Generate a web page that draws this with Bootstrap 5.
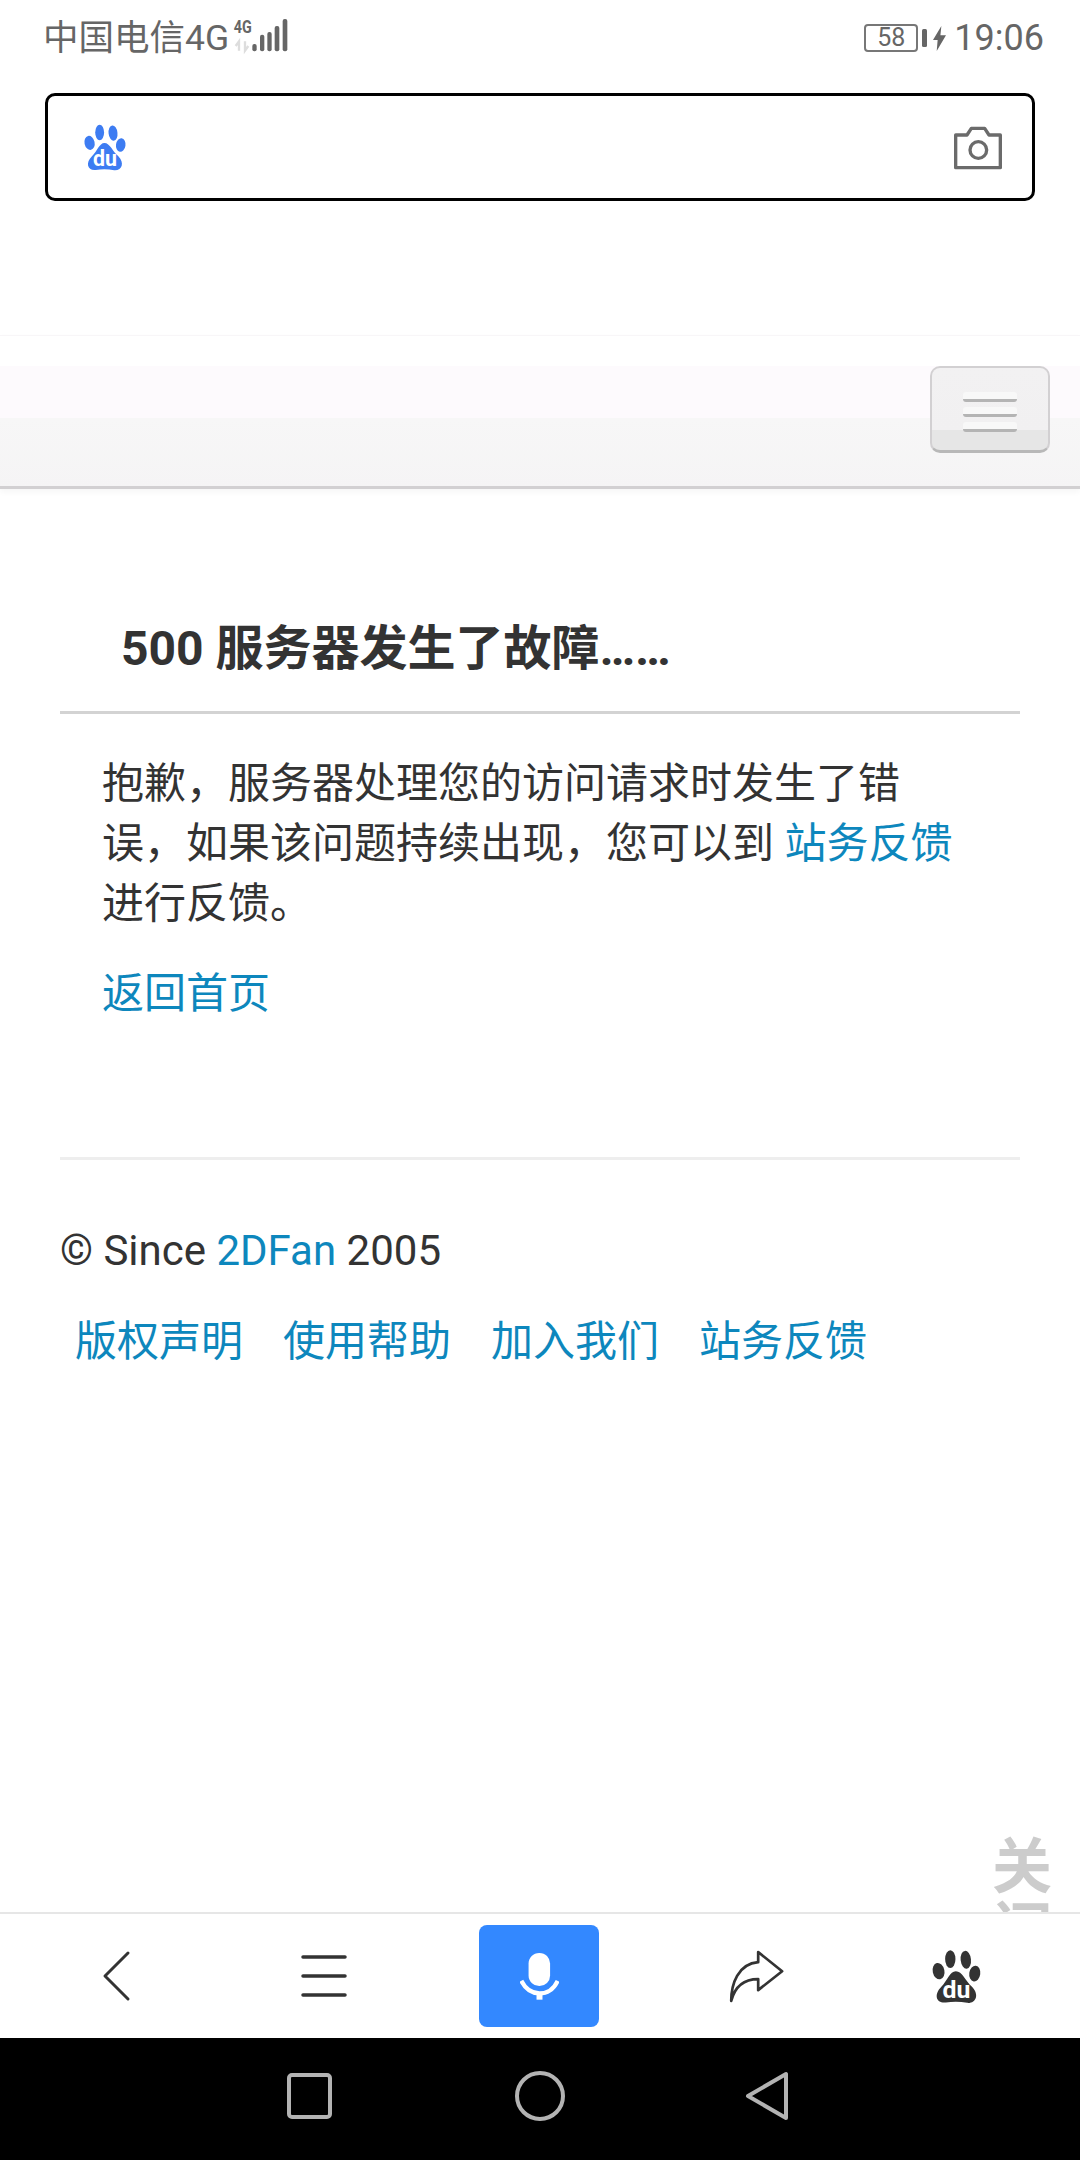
<!doctype html>
<html lang="zh-CN">
<head>
  <meta charset="UTF-8">
  <title>500 服务器发生了故障</title>
  <link rel="stylesheet" href="https://cdn.jsdelivr.net/npm/bootstrap@5.3.0/dist/css/bootstrap.min.css">
  <style>
    html, body { margin: 0; height: 2160px; overflow: hidden; }
    body { background: #fff; color: #333; font-family: Roboto, "Noto Sans CJK SC", sans-serif; font-size: 42px; line-height: 60px; }
    a { color: #0d87bd; text-decoration: none; }
    svg { display: block; flex: none; }
    .shell { height: 2160px; }
    .statusbar { height: 68px; padding: 18px 36px 0 43px; color: #666; font-size: 35.500px; line-height: 40px; }
    .signal-icon { margin: -8px 0 0 -2px; }
    .status-time { font-size: 36px; margin-left: 8px; }
    .batt { width: 54px; height: 28px; border: 2px solid #777; border-radius: 4px; font-size: 25px; line-height: 24px; text-align: center; color: #666; }
    .nub-icon { margin-left: 4px; }
    .bolt-icon { margin-left: 6px; }
    .searchbox { height: 108px; margin: 25px 45px 0 45px; padding: 0 29px 0 35px; border: 3px solid #000; border-radius: 10px; }
    .topnav { height: 154px; margin-top: 134px; padding: 30px 30px 0 0; align-items: flex-start; background: linear-gradient(#fff 0, #fff 30px, #fdfafd 30px, #fdfafd 82px, #f7f7f7 82px, #f5f4f5 152px); border-top: 1px solid #f8f6f8; border-bottom: 3px solid #d2d0d2; box-shadow: 0 3px 6px rgba(0,0,0,.04); }
    .menu-toggle { width: 120px; height: 87px; padding: 6px 0 0; gap: 5px; border: 2px solid #d2d0d2; border-bottom: 3px solid #b8b8b8; border-radius: 10px; background: linear-gradient(#f2f1f2, #f1f0f1 75%, #e6e6e6 75%); }
    .menu-toggle:hover { background: linear-gradient(#f2f1f2, #f1f0f1 75%, #e6e6e6 75%); }
    .menu-bar { width: 54px; height: 10px; border-radius: 3px; background: #f8f8f8; border-bottom: 3px solid #b4b4b4; }
    .content { padding: 0 60px; }
    .err-title { margin: 0; padding: 132px 0 0 61px; height: 222px; font-size: 48px; line-height: 56px; font-weight: 700; color: #333; }
    .err-rule { border-top: 3px solid #d3d3d3; }
    .err-text { padding: 40px 42px 0; }
    .err-text p { margin: 0 0 30px; }
    .foot-rule { margin-top: 133px; border-top: 3px solid #eee; }
    .foot-copy { margin-top: 61px; }
    .foot-links { margin-top: 31px; padding-left: 15px; gap: 40px; }
    .watermark { position: absolute; left: 992px; top: 1836px; width: 62px; height: 76px; overflow: hidden; color: #ccc; font-size: 60px; line-height: 64px; font-weight: 700; }
    .toolbar { height: 126px; border-top: 2px solid #e6e6e6; background: #fff; position: relative; }
    .tool-back { margin-left: 101px; }
    .tool-menu { margin-left: 170px; }
    .mic-btn { width: 120px; height: 102px; margin-left: 132px; background: #3388ff; border-radius: 8px; }
    .tool-share { margin-left: 127px; }
    .tool-paw { margin-left: 144px; }
    .sysnav { height: 122px; padding-bottom: 6px; background: #000; }
    .nav-square { margin-left: 287px; }
    .nav-circle { margin-left: 183px; }
    .nav-triangle { margin-left: 180px; }
  </style>
</head>
<body>
<div class="shell d-flex flex-column">
  <div class="statusbar d-flex justify-content-between align-items-start">
    <div class="d-flex align-items-start">
      <span>中国电信4G</span>
      <svg class="signal-icon" width="70" height="50" viewBox="30 0 210 150">
        <text x="50" y="68" fill="#666" font-family="Roboto, sans-serif" font-weight="700" font-size="54" textLength="54" lengthAdjust="spacingAndGlyphs">4G</text>
        <path d="M66 122V94l-10 14M84 94v28l10-14" fill="none" stroke="#ddd" stroke-width="7"/>
        <rect x="106" y="102" width="13" height="22" rx="6" fill="#666"/>
        <rect x="129" y="74" width="13" height="50" rx="6" fill="#666"/>
        <rect x="151" y="66" width="13" height="58" rx="6" fill="#666"/>
        <rect x="173" y="48" width="14" height="76" rx="6" fill="#666"/>
        <rect x="197" y="27" width="14" height="97" rx="6" fill="#666"/>
      </svg>
    </div>
    <div class="d-flex align-items-center">
      <div class="batt">58</div>
      <svg class="nub-icon" width="5" height="18" viewBox="0 0 5 18"><rect width="5" height="18" rx="1.500" fill="#666"/></svg>
      <svg class="bolt-icon" width="13" height="27" viewBox="0 0 14 27"><path d="M9 0L0 15h5l-1 12L14 10H8z" fill="#666"/></svg>
      <span class="status-time">19:06</span>
    </div>
  </div>

  <div class="searchbox d-flex align-items-center justify-content-between">
    <svg width="44" height="49" viewBox="1135 385 148 165" fill="#3d7cf2">
      <ellipse cx="1157" cy="452" rx="17" ry="24" transform="rotate(-12 1157 452)"/>
      <ellipse cx="1191" cy="417" rx="15" ry="26"/>
      <ellipse cx="1236" cy="419" rx="15" ry="26" transform="rotate(-6 1236 419)"/>
      <ellipse cx="1262" cy="459" rx="16" ry="23" transform="rotate(8 1262 459)"/>
      <path d="M1207 452C1190 452 1182 480 1165 497C1142 520 1150 546 1178 543C1198 540 1220 540 1240 544C1266 546 1276 520 1254 497C1234 480 1226 452 1207 452Z"/>
      <text x="1209" y="530" text-anchor="middle" fill="#fff" font-family="Roboto, sans-serif" font-weight="700" font-size="72">du</text>
    </svg>
    <svg width="50" height="45" viewBox="520 375 150 135" fill="none" stroke="#6b6b6b" stroke-width="10" stroke-linejoin="round">
      <path d="M528 405H562L575 385H615L628 405H662V503H528Z"/>
      <circle cx="596" cy="450" r="25"/>
    </svg>
  </div>

  <nav class="navbar topnav justify-content-end">
    <button class="btn menu-toggle d-flex flex-column align-items-center justify-content-center" type="button" aria-label="菜单">
      <span class="menu-bar"></span>
      <span class="menu-bar"></span>
      <span class="menu-bar"></span>
    </button>
  </nav>

  <main class="content flex-grow-1">
    <h1 class="err-title">500 服务器发生了故障……</h1>
    <div class="err-rule"></div>
    <div class="err-text">
      <p>抱歉，服务器处理您的访问请求时发生了错误，如果该问题持续出现，您可以到 <a href="#">站务反馈</a> 进行反馈。</p>
      <p><a href="#">返回首页</a></p>
    </div>
    <div class="foot-rule"></div>
    <div class="foot-copy">© Since <a href="#">2DFan</a> 2005</div>
    <div class="foot-links d-flex">
      <a href="#">版权声明</a>
      <a href="#">使用帮助</a>
      <a href="#">加入我们</a>
      <a href="#">站务反馈</a>
    </div>
  </main>

  <div class="watermark">关闭</div>

  <div class="toolbar d-flex align-items-center">
    <svg class="tool-back" width="30" height="52" viewBox="0 0 30 52" fill="none" stroke="#333" stroke-width="3" stroke-linecap="round" stroke-linejoin="round"><path d="M27 3L4 26l23 23"/></svg>
    <svg class="tool-menu" width="46" height="44" viewBox="0 0 46 44" stroke="#333" stroke-width="3.500" stroke-linecap="round"><path d="M2 3h42M2 22h42M2 41h42"/></svg>
    <div class="mic-btn d-flex align-items-center justify-content-center">
      <svg width="39" height="48" viewBox="178 90 116 145" fill="#fff">
        <rect x="203" y="93" width="65" height="100" rx="32"/>
        <path d="M181 177C195 205 215 215 236 215S278 205 291 177" fill="none" stroke="#fff" stroke-width="13"/>
        <rect x="227" y="212" width="18" height="22"/>
      </svg>
    </div>
    <svg class="tool-share" width="61" height="59" viewBox="540 380 180 175" fill="none" stroke="#333" stroke-width="8" stroke-linejoin="round"><path d="M555 540C555 490 575 430 635 425V395L706 452 635 508V475C590 475 565 500 555 540Z"/></svg>
    <svg class="tool-paw" width="51" height="57" viewBox="1135 385 148 165" fill="#333">
      <ellipse cx="1157" cy="452" rx="17" ry="24" transform="rotate(-12 1157 452)"/>
      <ellipse cx="1191" cy="417" rx="15" ry="26"/>
      <ellipse cx="1236" cy="419" rx="15" ry="26" transform="rotate(-6 1236 419)"/>
      <ellipse cx="1262" cy="459" rx="16" ry="23" transform="rotate(8 1262 459)"/>
      <path d="M1207 452C1190 452 1182 480 1165 497C1142 520 1150 546 1178 543C1198 540 1220 540 1240 544C1266 546 1276 520 1254 497C1234 480 1226 452 1207 452Z"/>
      <text x="1209" y="530" text-anchor="middle" fill="#fff" font-family="Roboto, sans-serif" font-weight="700" font-size="72">du</text>
    </svg>
  </div>

  <div class="sysnav d-flex align-items-center">
    <svg class="nav-square" width="45" height="46" viewBox="0 0 45 46" fill="none" stroke="#b3b3b3" stroke-width="4"><rect x="2" y="2" width="41" height="42" rx="3"/></svg>
    <svg class="nav-circle" width="50" height="50" viewBox="0 0 50 50" fill="none" stroke="#b3b3b3" stroke-width="4"><circle cx="25" cy="25" r="23"/></svg>
    <svg class="nav-triangle" width="44" height="50" viewBox="0 0 44 50" fill="none" stroke="#b3b3b3" stroke-width="4" stroke-linejoin="round"><path d="M41 3V47L3 25Z"/></svg>
  </div>
</div>

<script src="https://cdn.jsdelivr.net/npm/bootstrap@5.3.0/dist/js/bootstrap.bundle.min.js"></script>
</body>
</html>
